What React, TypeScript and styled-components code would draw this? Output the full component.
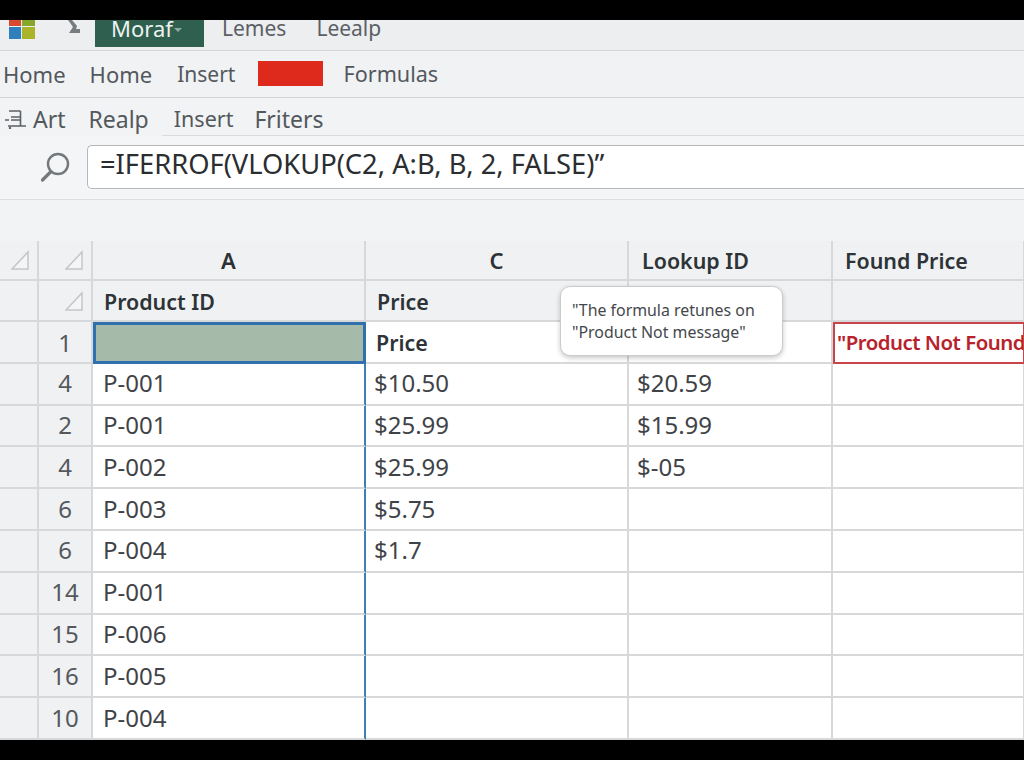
import React from 'react';
import styled, { createGlobalStyle } from 'styled-components';

const GlobalStyle = createGlobalStyle`
  html, body { margin: 0; padding: 0; background: #000; }
  body { font-family: "Noto Sans", "Open Sans", "Liberation Sans", sans-serif; overflow: hidden; }
`;

const Screen = styled.div`
  width: 1024px;
  height: 760px;
  padding: 20px 0;
  box-sizing: border-box;
  background: #000;
`;

const Window = styled.div`
  height: 720px;
  display: flex;
  flex-direction: column;
  background: #eff1f2;
  overflow: hidden;
`;

const TitleBar = styled.div`
  height: 30px;
  display: flex;
  align-items: flex-start;
  background: #eceeef;
  border-bottom: 1px solid #d4d6d8;
`;

const AppLogo = styled.svg`
  width: 27px;
  height: 20px;
  margin-left: 9px;
  flex: none;
`;

const Chevron = styled.svg`
  width: 12px;
  height: 13px;
  margin-left: 32px;
  flex: none;
`;

const ActiveTab = styled.div`
  width: 109px;
  height: 27px;
  margin-left: 15px;
  display: flex;
  align-items: center;
  padding-left: 16px;
  box-sizing: border-box;
  background: #2f5f4e;
  color: #edf2ef;
  font-size: 22px;
  line-height: 16px;
  white-space: nowrap;
  span { margin-top: -11px; }
  i {
    width: 0;
    height: 0;
    margin: -8px 0 0 1px;
    border: 4px solid transparent;
    border-top: 4px solid #8fa99f;
    border-bottom: 0;
  }
`;

const TitleLink = styled.div<{ $gap: number }>`
  margin-left: ${(p) => p.$gap}px;
  color: #5b6066;
  font-size: 21px;
  line-height: 16px;
  white-space: nowrap;
`;

const RibbonRow = styled.div`
  height: 46px;
  display: flex;
  align-items: center;
  background: #f1f2f4;
  border-bottom: 1px solid #d2d4d6;
`;

const RibbonItem = styled.div<{ $left: number; $size?: number }>`
  margin-left: ${(p) => p.$left}px;
  color: #53585d;
  font-size: ${(p) => p.$size ?? 22}px;
  white-space: nowrap;
`;

const RedSwatch = styled.div`
  width: 65px;
  height: 25px;
  margin-left: 23px;
  background: #dd2a1d;
`;

const ToolRow = styled.div`
  position: relative;
  height: 38px;
  box-sizing: border-box;
  padding-top: 4px;
  display: flex;
  align-items: center;
  background: #f1f3f4;
  &::after {
    content: '';
    position: absolute;
    left: 162px;
    right: 0;
    bottom: 0;
    height: 1px;
    background: #d9dbdd;
  }
`;

const ToolIcon = styled.svg`
  width: 22px;
  height: 20px;
  margin-left: 5px;
  flex: none;
`;

const ToolItem = styled.div<{ $left: number; $size?: number }>`
  margin-left: ${(p) => p.$left}px;
  color: #53585d;
  font-size: ${(p) => p.$size ?? 23}px;
  white-space: nowrap;
`;

const FormulaRow = styled.div`
  height: 64px;
  display: flex;
  align-items: flex-start;
  background: #f4f5f6;
  border-bottom: 1px solid #dcdee0;
`;

const SearchIcon = styled.svg`
  width: 32px;
  height: 32px;
  margin: 15px 0 0 39px;
  flex: none;
`;

const FormulaInput = styled.div`
  width: 960px;
  height: 44px;
  margin: 9px 0 0 16px;
  padding: 0 0 7px 12px;
  box-sizing: border-box;
  display: flex;
  align-items: center;
  background: #fff;
  border: 1px solid #b5b8bb;
  border-right: 0;
  border-radius: 5px 0 0 5px;
  color: #2b2e31;
  font-size: 27.3px;
  white-space: nowrap;
`;

const Spacer = styled.div`
  height: 41px;
  background: #f1f3f4;
`;

const Sheet = styled.div`
  position: relative;
  display: grid;
  grid-template-columns: 39px 54px 273px 263px 204px 192px;
  grid-template-rows: 40px 41px repeat(10, 41.8px);
  background: #fff;
`;

const Cell = styled.div<{ $kind?: 'gutter' | 'head'; $blueRight?: boolean; $pad?: number }>`
  box-sizing: border-box;
  display: flex;
  align-items: center;
  min-width: 0;
  overflow: hidden;
  white-space: nowrap;
  color: #3f4347;
  font-size: 24px;
  padding-left: ${(p) => p.$pad ?? 8}px;
  border-bottom: 2px solid #d6d8da;
  border-right: ${(p) => (p.$blueRight ? '2px solid #3f7fb5' : '2px solid #d6d8da')};
  background: ${(p) => (p.$kind ? '#eff1f2' : '#fff')};
`;

const BodyCell = styled(Cell)`
  padding-bottom: 2px;
`;

const CornerCell = styled(Cell)`
  justify-content: flex-end;
  padding: 0 8px 0 0;
`;

const RowNumber = styled(Cell)`
  justify-content: center;
  padding: 0 0 2px;
  color: #55595d;
`;

const FirstRowNumber = styled(RowNumber)`
  padding: 2px 0 0;
`;

const ColumnLetter = styled(Cell)`
  justify-content: center;
  padding: 0;
  color: #2d3135;
  font-size: 22px;
  font-weight: 600;
`;

const HeadLabel = styled(Cell)`
  color: #2d3337;
  font-size: 21.4px;
  font-weight: 600;
`;

const SubHeadLabel = styled(HeadLabel)`
  padding-top: 2px;
`;

const SelectedCell = styled(Cell)`
  background: #a5baa8;
  border: 3px solid #2f70ad;
`;

const ErrorCell = styled(Cell)`
  padding: 0 0 1px 2px;
  border: 2px solid #c8434a;
  color: #b8222c;
  font-size: 20.4px;
  font-weight: 600;
  letter-spacing: -0.5px;
`;

const Callout = styled.div`
  position: absolute;
  left: 560px;
  top: 45px;
  width: 223px;
  height: 70px;
  box-sizing: border-box;
  padding: 12px 0 0 11px;
  background: #fff;
  border: 1px solid #c9cbcd;
  border-radius: 10px;
  box-shadow: 0 2px 5px rgba(0, 0, 0, 0.22);
  color: #44484c;
  font-size: 15.9px;
  line-height: 22px;
  white-space: nowrap;
`;

const Triangle = () => (
  <svg width="18" height="20" viewBox="0 0 18 20">
    <path d="M1 19 L17 2 V19 Z" fill="#f4f5f6" stroke="#c3c6c9" strokeWidth="1.5" />
  </svg>
);

const rows = [
  { n: '4', a: 'P-001', c: '$10.50', d: '$20.59' },
  { n: '2', a: 'P-001', c: '$25.99', d: '$15.99' },
  { n: '4', a: 'P-002', c: '$25.99', d: '$-05' },
  { n: '6', a: 'P-003', c: '$5.75', d: '' },
  { n: '6', a: 'P-004', c: '$1.7', d: '' },
  { n: '14', a: 'P-001', c: '', d: '' },
  { n: '15', a: 'P-006', c: '', d: '' },
  { n: '16', a: 'P-005', c: '', d: '' },
  { n: '10', a: 'P-004', c: '', d: '' },
];

export default function App() {
  return (
    <>
      <GlobalStyle />
      <Screen>
        <Window>
          <TitleBar>
            <AppLogo viewBox="0 0 27 20">
              <rect x="0" y="-6" width="12" height="12" fill="#d8492f" />
              <rect x="13" y="-6" width="13" height="12" fill="#86a62c" />
              <rect x="0" y="7" width="12" height="12" fill="#2f7fbd" />
              <rect x="13" y="7" width="13" height="12" fill="#a9b42a" />
            </AppLogo>
            <Chevron viewBox="0 0 12 13">
              <path d="M0 0 H4 L9 6 L8 9 H12 V13 H1 L5 7 Z" fill="#777c7f" />
            </Chevron>
            <ActiveTab>
              <span>Moraf</span>
              <i />
            </ActiveTab>
            <TitleLink $gap={18}>Lemes</TitleLink>
            <TitleLink $gap={30}>Leealp</TitleLink>
          </TitleBar>
          <RibbonRow>
            <RibbonItem $left={3}>Home</RibbonItem>
            <RibbonItem $left={24}>Home</RibbonItem>
            <RibbonItem $left={25} $size={21}>Insert</RibbonItem>
            <RedSwatch />
            <RibbonItem $left={20} $size={21.6}>Formulas</RibbonItem>
          </RibbonRow>
          <ToolRow>
            <ToolIcon viewBox="0 0 22 20">
              <path d="M4 2 H15.5 M6 8 H15.5 M6 11 H15.5 M3 17 H21 M15.5 2 V17 M0 11 H4" stroke="#5c6165" strokeWidth="1.6" fill="none" />
              <circle cx="5" cy="19" r="1.2" fill="#5c6165" />
            </ToolIcon>
            <ToolItem $left={6}>Art</ToolItem>
            <ToolItem $left={23}>Realp</ToolItem>
            <ToolItem $left={25} $size={21.5}>Insert</ToolItem>
            <ToolItem $left={21}>Friters</ToolItem>
          </ToolRow>
          <FormulaRow>
            <SearchIcon viewBox="0 0 32 32">
              <circle cx="19" cy="13" r="10" fill="none" stroke="#74787b" strokeWidth="2.4" />
              <path d="M11.5 21 L3.5 29" stroke="#74787b" strokeWidth="3.2" strokeLinecap="round" />
            </SearchIcon>
            <FormulaInput>=IFERROF(VLOKUP(C2, A:B, B, 2, FALSE)”</FormulaInput>
          </FormulaRow>
          <Spacer />
          <Sheet>
            <CornerCell $kind="gutter"><Triangle /></CornerCell>
            <CornerCell $kind="gutter"><Triangle /></CornerCell>
            <ColumnLetter $kind="head">A</ColumnLetter>
            <ColumnLetter $kind="head">C</ColumnLetter>
            <HeadLabel $kind="head" $pad={13}>Lookup ID</HeadLabel>
            <HeadLabel $kind="head" $pad={12}>Found Price</HeadLabel>

            <Cell $kind="gutter" />
            <CornerCell $kind="gutter"><Triangle /></CornerCell>
            <SubHeadLabel $kind="head" $pad={11}>Product ID</SubHeadLabel>
            <SubHeadLabel $kind="head" $pad={11}>Price</SubHeadLabel>
            <Cell $kind="head" />
            <Cell $kind="head" />

            <Cell $kind="gutter" />
            <FirstRowNumber $kind="gutter">1</FirstRowNumber>
            <SelectedCell />
            <SubHeadLabel $pad={10}>Price</SubHeadLabel>
            <Cell />
            <ErrorCell>"Product Not Found</ErrorCell>

            {rows.map((r, i) => (
              <React.Fragment key={i}>
                <Cell $kind="gutter" />
                <RowNumber $kind="gutter">{r.n}</RowNumber>
                <BodyCell $blueRight $pad={10}>{r.a}</BodyCell>
                <BodyCell>{r.c}</BodyCell>
                <BodyCell>{r.d}</BodyCell>
                <Cell />
              </React.Fragment>
            ))}
            <Callout>
              "The formula retunes on
              <br />
              "Product Not message"
            </Callout>
          </Sheet>
        </Window>
      </Screen>
    </>
  );
}
